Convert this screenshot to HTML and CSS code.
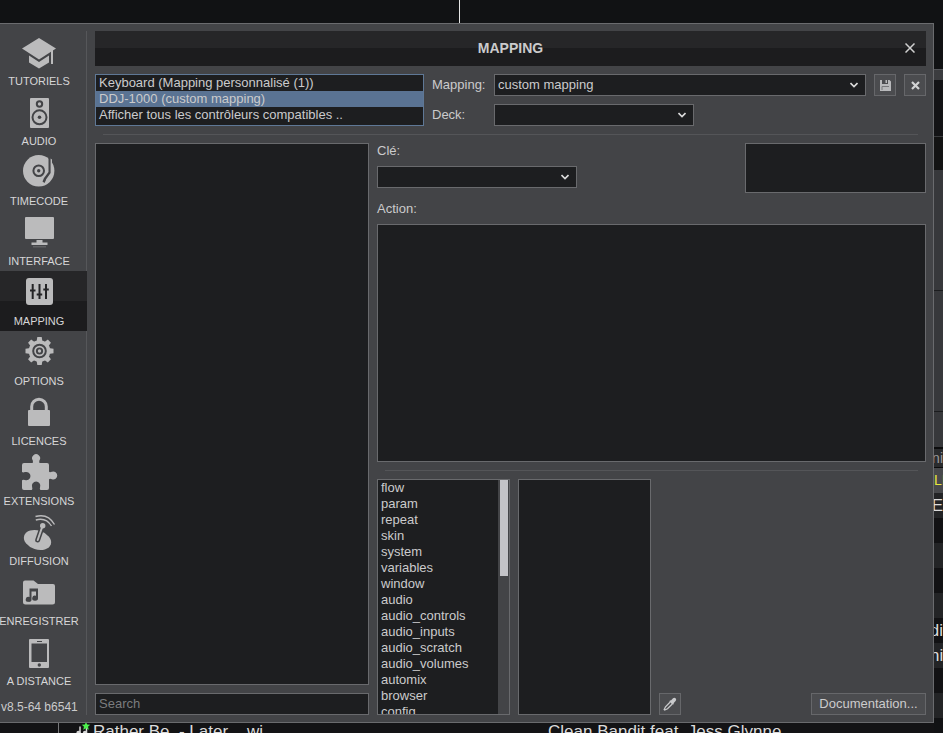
FILE: index.html
```html
<!DOCTYPE html>
<html lang="fr">
<head>
    <meta charset="UTF-8">
    <meta name="viewport" content="width=device-width, initial-scale=1.0">
    <title>Mapping</title>
    <link rel="stylesheet" href="styles.css">
</head>
<body>
    <div class="top-bar"><span class="playhead"></span></div>

    <main class="dialog">
        <nav class="sidebar">
            <a class="nav-item" href="#tutoriels">
                <svg class="nav-icon" viewBox="0 0 34 34"><path d="M17 3L34 13.5L17 24.5L0 13.5Z"/><path d="M7 20.5L17 27L27 20.5V27.5L17 33.5L7 27.5Z"/><path d="M29 15h2v14h-2z"/></svg>
                <span>TUTORIELS</span>
            </a>
            <a class="nav-item" href="#audio">
                <svg class="nav-icon" viewBox="0 0 34 34"><rect x="8" y="3" width="19" height="30" rx="1"/><circle class="line" cx="17.5" cy="9" r="2.7"/><circle class="line" cx="17.5" cy="22.3" r="7"/><circle class="hole" cx="17.5" cy="22.3" r="1.8"/></svg>
                <span>AUDIO</span>
            </a>
            <a class="nav-item" href="#timecode">
                <svg class="nav-icon" viewBox="0 0 34 34"><circle cx="16.7" cy="15.8" r="15.7"/><circle class="line" cx="16.7" cy="15.8" r="5.3"/><circle class="hole" cx="16.7" cy="15.8" r="1.7"/><path class="hole" d="M26.5 2.5L29.5 5V18.5L24 25L22.5 28L20.5 26.5L22 23L26.5 17Z"/><path d="M28.6 3.5L30 4.5V19L24.8 25.5L24 24.5L28.6 18Z"/></svg>
                <span>TIMECODE</span>
            </a>
            <a class="nav-item" href="#interface">
                <svg class="nav-icon" viewBox="0 0 34 34"><rect x="3" y="2" width="29" height="22" rx="1"/><path d="M14.5 25h6v2.5h5V30h-16v-2.5h5z"/><path opacity=".25" d="M11 31h13v1.5H11z"/></svg>
                <span>INTERFACE</span>
            </a>
            <a class="nav-item active" href="#mapping">
                <svg class="nav-icon" viewBox="0 0 34 34"><rect x="4" y="3" width="27" height="27" rx="3"/><path class="line" d="M10.7 9v15M17.5 9v15M24 9v15"/><path class="line" d="M8 15.5h5.5M14.7 19.5h5.5M21.3 14.5h5.5"/></svg>
                <span>MAPPING</span>
            </a>
            <a class="nav-item" href="#options">
                <svg class="nav-icon" viewBox="0 0 34 34"><circle cx="17.5" cy="16" r="10.8"/><path id="tooth" d="M14.5 7l.8-5h4.4l.8 5v18l-.8 5h-4.4l-.8-5z"/><use href="#tooth" transform="rotate(45 17.5 16)"/><use href="#tooth" transform="rotate(90 17.5 16)"/><use href="#tooth" transform="rotate(135 17.5 16)"/><circle class="line" cx="17.5" cy="16" r="6.3"/><circle class="hole" cx="17.5" cy="16" r="3.6"/><circle cx="17.5" cy="16" r="1.7"/></svg>
                <span>OPTIONS</span>
            </a>
            <a class="nav-item" href="#licences">
                <svg class="nav-icon" viewBox="0 0 34 34"><rect x="6" y="15" width="22" height="16" rx="1"/><path class="shackle" d="M9.7 16v-4.5a7.3 7.3 0 0 1 14.600 0V16"/></svg>
                <span>LICENCES</span>
            </a>
            <a class="nav-item" href="#extensions">
                <svg class="nav-icon" viewBox="0 0 34 34"><path d="M2 8h8.500q.8-.3.300-2.500a4 4 0 1 1 6.600 0q-.6 2.200.3 2.500H25q2 0 2 2v6.500q.5 1.200 3 .2a4 4 0 1 1 0 7.600q-2.500-1-3 .2V33q0 2-2 2h-6.500q-1.200-.5-.4-3a4.200 4.200 0 1 0-8 0q.8 2.500-.4 3H2q-2 0-2-2v-7.500q.5-1.200 3-.4a4.200 4.200 0 1 0 0-8q-2.500.8-3-.4V10q0-2 2-2z"/></svg>
                <span>EXTENSIONS</span>
            </a>
            <a class="nav-item" href="#diffusion">
                <svg class="nav-icon" viewBox="0 0 34 34"><ellipse cx="15.5" cy="25" rx="14" ry="9.5" transform="rotate(18 15.5 25)"/><path class="mast-edge" d="M15.7 25L20.5 11"/><path class="mast" d="M15.7 25L20.5 11"/><circle cx="20.7" cy="10.7" r="2.7"/><path class="wave" d="M13.5 1.500Q26-2 32.500 9.500M13.800 5Q24 2 29.500 11"/></svg>
                <span>DIFFUSION</span>
            </a>
            <a class="nav-item" href="#enregistrer">
                <svg class="nav-icon" viewBox="0 0 34 34"><path d="M3 5.500h8.500l4.500 3.500H31q2 0 2 2v16q0 2.500-2.500 2.500h-27Q1 29.500 1 27V7.500q0-2 2-2z"/><path class="hole" d="M7.500 13.500h8.500v9.500a2.900 2.500 0 1 1-2-2.200V16.500H9.500v7.700a2.900 2.500 0 1 1-2-2.200z"/></svg>
                <span>ENREGISTRER</span>
            </a>
            <a class="nav-item" href="#distance">
                <svg class="nav-icon" viewBox="0 0 34 34"><rect x="7" y="4" width="20" height="29" rx="1"/><path class="hole" d="M9.500 8.500h15.500V27H9.500zM15 6h5v1h-5z"/><circle class="hole" cx="17.3" cy="30" r="1.7"/></svg>
                <span>A DISTANCE</span>
            </a>
            <p class="version">v8.5-64 b6541</p>
        </nav>

        <section class="content">
            <header class="title-bar">
                <h1>MAPPING</h1>
                <button class="close" type="button" aria-label="Fermer">
                    <svg width="10" height="10" viewBox="0 0 10 10"><path d="M.5.500l9 9M9.500.500l-9 9"/></svg>
                </button>
            </header>

            <div class="device">
                <ul class="list device-list" role="listbox" aria-label="Contrôleurs">
                    <li role="option">Keyboard (Mapping personnalisé (1))</li>
                    <li role="option" class="selected" aria-selected="true">DDJ-1000 (custom mapping)</li>
                    <li role="option">Afficher tous les contrôleurs compatibles ..</li>
                </ul>
                <div class="device-form">
                    <label for="mapping">Mapping:</label>
                    <select id="mapping"><option>custom mapping</option></select>
                    <button class="btn icon-btn" type="button" aria-label="Enregistrer le mapping">
                        <svg width="11" height="11" viewBox="0 0 11 11"><path fill="#b8b9bb" d="M0 0h2v4h6V0h1.500L11 1.500V11H0z"/><path fill="#b8b9bb" d="M5.500 0H7v3H5.500z"/><path fill="none" stroke="#77787b" d="M2 10V6.500h7"/></svg>
                    </button>
                    <button class="btn icon-btn" type="button" aria-label="Supprimer le mapping">
                        <svg width="9" height="9" viewBox="0 0 9 9"><path fill="none" stroke="#d2d3d4" stroke-width="2.2" d="M1 1l7 7M8 1L1 8"/></svg>
                    </button>
                    <label for="deck">Deck:</label>
                    <select id="deck" class="short"></select>
                </div>
            </div>

            <hr>

            <div class="editor">
                <div class="keys">
                    <div class="box key-list" role="listbox" aria-label="Touches"></div>
                    <input id="search" type="text" placeholder="Search" aria-label="Search">
                </div>

                <div class="detail">
                    <div class="key-row">
                        <div class="field">
                            <label for="cle">Clé:</label>
                            <select id="cle" class="short"></select>
                        </div>
                        <div class="box key-info"></div>
                    </div>
                    <label for="action">Action:</label>
                    <textarea id="action"></textarea>

                    <hr>

                    <div class="verbs">
                        <div class="box verb-box">
                            <ul class="list verb-list" role="listbox" aria-label="Catégories">
                                <li role="option">flow</li>
                                <li role="option">param</li>
                                <li role="option">repeat</li>
                                <li role="option">skin</li>
                                <li role="option">system</li>
                                <li role="option">variables</li>
                                <li role="option">window</li>
                                <li role="option">audio</li>
                                <li role="option">audio_controls</li>
                                <li role="option">audio_inputs</li>
                                <li role="option">audio_scratch</li>
                                <li role="option">audio_volumes</li>
                                <li role="option">automix</li>
                                <li role="option">browser</li>
                                <li role="option">config</li>
                            </ul>
                            <div class="scrollbar"><div class="thumb"></div></div>
                        </div>
                        <div class="box verb-box"></div>
                        <button class="btn icon-btn" type="button" aria-label="Pipette">
                            <svg width="14" height="14" viewBox="0 0 14 14"><path fill="#c8c9cb" d="M7 3.500l1.200-.2L10 1.200q1.500-1 2.600 0t.2 2.600L10.800 6l-.2 1.300-1 .4L6.300 4.500z"/><path fill="none" stroke="#c8c9cb" stroke-width="1.3" d="M7 5.200L2.500 9.800 1.200 12.600l.5.400 2.800-1.200L9 7.200"/></svg>
                        </button>
                        <button class="btn doc-btn" type="button">Documentation...</button>
                    </div>
                </div>
            </div>
        </section>
    </main>

    <div class="track-row">
        <span class="track-mark">
            <svg width="16" height="16" viewBox="0 0 16 16"><path fill="none" stroke="#d8d8d8" stroke-width="1.5" d="M5 10V3.500M11.500 10V5"/><circle fill="#d8d8d8" cx="3.5" cy="10" r="2.2"/><circle fill="#d8d8d8" cx="10" cy="10" r="2.2"/><path fill="#4cf04c" d="M11 -1l1.200 2.500 3 .2-2.200 2 .8 3L11 5.200 8.200 6.700 9 3.700l-2.200-2 3-.2z"/></svg>
        </span>
        <span class="track-title">Rather Be&nbsp; - Later .. wi</span>
        <span class="track-artist">Clean Bandit feat. Jess Glynne</span>
    </div>

    <aside class="deck-edge">
        <div class="band wave-top"></div>
        <div class="band bar"></div>
        <div class="band upper"></div>
        <div class="band lower"></div>
        <div class="band panel"></div>
        <div class="band panel"></div>
        <div class="band panel last"></div>
        <div class="band head">ni</div>
        <div class="band current">LI</div>
        <div class="band row lit">E</div>
        <div class="band row"></div>
        <div class="band row lit"></div>
        <div class="band row"></div>
        <div class="band row lit"></div>
        <div class="band row">di</div>
        <div class="band row lit middle">mix</div>
        <div class="band row"></div>
        <div class="band row lit"></div>
    </aside>
</body>
</html>
```

FILE: styles.css
```css
* {
    box-sizing: border-box;
}
body {
    margin: 0;
    height: 100vh;
    display: grid;
    grid-template-columns: minmax(0, 1fr) 9px;
    grid-template-rows: 23px minmax(0, 1fr) 10px;
    overflow: hidden;
    background: #111214;
    color: #cbcbcc;
    font-family: "Liberation Sans", Arial, sans-serif;
    font-size: 13px;
    line-height: 15px;
}
ul, p, h1 {
    margin: 0;
    padding: 0;
}
svg {
    display: block;
}

/* application behind the dialog */
.top-bar {
    grid-column: 1;
    display: flex;
    padding-left: 459px;
}
.playhead {
    width: 1px;
    background: #e6e6e6;
}
.track-row {
    grid-column: 1;
    display: flex;
    overflow: hidden;
    background: #131315;
    color: #dcdcdc;
    font-size: 17px;
    line-height: 17px;
    white-space: nowrap;
}
.track-mark {
    width: 93px;
    flex: none;
    padding-left: 75px;
    background: linear-gradient(#77787a, #77787a) 58px 0 / 1px 100% no-repeat;
}
.track-title {
    flex: none;
    width: 455px;
}
.deck-edge {
    grid-column: 2;
    grid-row: 1 / -1;
    display: flex;
    flex-direction: column;
    overflow: hidden;
    color: #dcdcdc;
    font-size: 17px;
}
.band {
    flex: none;
    display: flex;
    align-items: center;
    justify-content: flex-end;
    overflow: hidden;
}
.wave-top {
    height: 69px;
}
.bar {
    height: 11px;
    background: #3b3c3f;
    border-top: 1px solid #55565a;
}
.upper {
    height: 57px;
    background: #131315;
    border-bottom: 1px solid #3a3b3d;
}
.lower {
    height: 33px;
    background: #131313;
}
.panel {
    height: 121px;
    background: #37383b;
    border-bottom: 1px solid #1b1c1e;
}
.panel.last {
    height: 37px;
    border-bottom: 2px solid #0c0c0d;
}
.head {
    height: 19px;
    background: #2a2b2d;
    border-bottom: 1px solid #0c0c0d;
    color: #9a9b9c;
    font-size: 14px;
}
.current {
    height: 25px;
    justify-content: flex-start;
    background: #48494c;
    color: #e6e63c;
    font-size: 14px;
}
.row {
    height: 25px;
    background: #121214;
}
.row.lit {
    background: #232426;
}
.row.middle {
    justify-content: center;
}

/* dialog */
.dialog {
    grid-column: 1;
    display: flex;
    padding: 7px 7px 7px 0;
    background: #434447;
    border: 1px solid #6a6b6e;
    border-left: 0;
}
.sidebar {
    flex: none;
    width: 87px;
    border-right: 1px solid #56575a;
}
.nav-item {
    display: flex;
    flex-direction: column;
    align-items: center;
    gap: 5px;
    height: 60px;
    margin-right: -1px;
    padding: 4px 9px 0 0;
    color: #d6d6d7;
    font-size: 11px;
    line-height: 14px;
    text-decoration: none;
    white-space: nowrap;
}
.nav-item.active {
    background: linear-gradient(#262628 50%, #1c1c1e 50%);
}
.nav-icon {
    flex: none;
    width: 34px;
    height: 34px;
    overflow: visible;
    fill: #bbbbbc;
}
.nav-icon .line {
    fill: none;
    stroke: #434447;
    stroke-width: 2;
}
.nav-icon .hole {
    fill: #434447;
}
.active .nav-icon .line {
    stroke: #242426;
}
.nav-icon .shackle {
    fill: none;
    stroke: #bbbbbc;
    stroke-width: 3;
}
.nav-icon .mast-edge {
    stroke: #434447;
    stroke-width: 5;
    stroke-linecap: round;
}
.nav-icon .mast {
    stroke: #bbbbbc;
    stroke-width: 2;
    stroke-linecap: round;
}
.nav-icon .wave {
    fill: none;
    stroke: #bbbbbc;
    stroke-width: 1.4;
}
.version {
    padding: 8px 0 0 1px;
    font-size: 12px;
    line-height: 16px;
    white-space: nowrap;
}

.content {
    flex: 1;
    min-width: 0;
    display: flex;
    flex-direction: column;
    padding-left: 8px;
}
.title-bar {
    flex: none;
    display: grid;
    grid-template-columns: 1fr auto 1fr;
    align-items: center;
    height: 35px;
    margin-bottom: 8px;
    padding: 0 11px 2px;
    background: linear-gradient(#262628 50%, #1c1c1e 50%);
}
.title-bar h1 {
    grid-column: 2;
    font-size: 14px;
    line-height: 16px;
}
.close {
    justify-self: end;
    padding: 0;
    border: 0;
    background: none;
    cursor: pointer;
}
.close path {
    fill: none;
    stroke: #d0d0d0;
    stroke-width: 1.5;
}
hr {
    flex: none;
    align-self: stretch;
    height: 1px;
    margin: 8px;
    border: 0;
    background: #545558;
}

.box, select, input, textarea {
    background: #1d1e20;
    border: 1px solid #696a6d;
}
select, input, textarea, button {
    margin: 0;
    border-radius: 0;
    color: inherit;
    font: inherit;
    outline: none;
}
select, input {
    height: 22px;
    padding: 0 3px 2px;
}
select {
    width: 100%;
    padding-right: 20px;
    appearance: none;
    background: #1d1e20 url("data:image/svg+xml,%3Csvg xmlns='http://www.w3.org/2000/svg' width='8' height='6'%3E%3Cpath d='M.5 1L4 4.500L7.500 1' fill='none' stroke='%23dddddd' stroke-width='1.600'/%3E%3C/svg%3E") right 7px center no-repeat;
}
select.short {
    width: 200px;
}
input::placeholder {
    color: #7b7c7e;
    opacity: 1;
}
textarea {
    padding: 0;
    resize: none;
}
.btn {
    height: 22px;
    padding: 0;
    background: #4b4c4f;
    border: 1px solid #66676a;
    cursor: pointer;
}
.icon-btn {
    display: flex;
    align-items: center;
    justify-content: center;
    width: 22px;
}

.list {
    list-style: none;
    line-height: 16px;
    white-space: nowrap;
    overflow: hidden;
}
.list li {
    padding-left: 3px;
}
.list .selected {
    background: #5a7393;
}
.device {
    flex: none;
    display: flex;
    gap: 8px;
}
.device-list {
    flex: none;
    width: 329px;
    height: 52px;
    background: #1d1e20;
    border: 1px solid #5f7896;
}
.device-form {
    flex: 1;
    display: grid;
    grid-template-columns: 54px minmax(0, 1fr) 22px 22px;
    gap: 8px;
    align-items: center;
}
.device-form label {
    padding-bottom: 2px;
}

.editor {
    flex: 1;
    min-height: 0;
    display: grid;
    grid-template-columns: 274px minmax(0, 1fr);
    gap: 8px;
}
.keys, .detail {
    display: flex;
    flex-direction: column;
    min-height: 0;
}
.keys {
    gap: 8px;
}
.key-list {
    flex: 1;
}
.key-row {
    display: flex;
    justify-content: space-between;
    margin-bottom: 8px;
}
.field {
    display: flex;
    flex-direction: column;
    gap: 8px;
}
.key-info {
    width: 181px;
    height: 50px;
}
#action {
    flex: 1 1 0;
    min-height: 0;
    margin-top: 8px;
    border-width: 1px;
}
.verbs {
    flex: 1 1 0;
    min-height: 0;
    display: flex;
    align-items: flex-end;
    gap: 8px;
}
.verb-box {
    display: flex;
    flex: none;
    width: 133px;
    height: 100%;
}
.verb-list {
    flex: 1;
}
.scrollbar {
    flex: none;
    width: 11px;
    padding: 0 1px 0 2px;
    background: #434447;
}
.thumb {
    height: 96px;
    background: #c3c3c7;
}
.doc-btn {
    width: 115px;
    padding-bottom: 2px;
    margin-left: auto;
}
```
